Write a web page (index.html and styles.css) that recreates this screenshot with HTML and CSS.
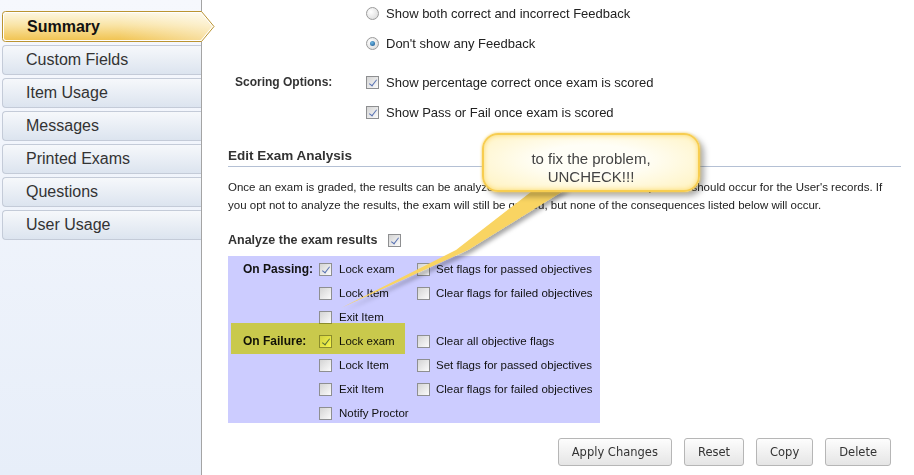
FILE: index.html
```html
<!DOCTYPE html>
<html lang="en">
<head>
  <meta charset="UTF-8">
  <meta name="viewport" content="width=device-width, initial-scale=1.0">
  <title>Exam Summary</title>
  <link rel="stylesheet" href="styles.css">
</head>
<body>
  <div class="layout">
    <aside class="sidebar">
      <ul class="tabs">
        <li class="tab active">
          <svg class="tab-bg" width="213" height="31" viewBox="0 0 213 31">
            <defs>
              <linearGradient id="tabGold" x1="0" y1="0" x2="0" y2="1">
                <stop offset="0" stop-color="#fdf6df"/>
                <stop offset="0.45" stop-color="#f9e4a6"/>
                <stop offset="1" stop-color="#f1c453"/>
              </linearGradient>
              <linearGradient id="tabFade" x1="0" y1="0" x2="1" y2="0">
                <stop offset="0.55" stop-color="#fff" stop-opacity="0"/>
                <stop offset="1" stop-color="#fff" stop-opacity="0.45"/>
              </linearGradient>
            </defs>
            <path d="M3.5,0.5 H199.5 L212,15.5 L199.5,30.5 H3.5 Q0.5,30.5 0.5,27.5 V3.5 Q0.5,0.5 3.5,0.5 Z" fill="#fff" stroke="#bb9431"/>
            <path d="M4,2 H198.8 L210,15.5 L198.8,29 H4 Q2,29 2,27 V4 Q2,2 4,2 Z" fill="url(#tabGold)"/>
            <path d="M4,2 H198.8 L210,15.5 L198.8,29 H4 Q2,29 2,27 V4 Q2,2 4,2 Z" fill="url(#tabFade)"/>
          </svg>
          <span class="tab-text">Summary</span>
        </li>
        <li class="tab">Custom Fields</li>
        <li class="tab">Item Usage</li>
        <li class="tab">Messages</li>
        <li class="tab">Printed Exams</li>
        <li class="tab">Questions</li>
        <li class="tab">User Usage</li>
      </ul>
    </aside>

    <main class="content">
      <div class="options feedback">
        <div class="opt-row">
          <span class="opt-label"></span>
          <span class="radio"></span>
          <span>Show both correct and incorrect Feedback</span>
        </div>
        <div class="opt-row">
          <span class="opt-label"></span>
          <span class="radio on"></span>
          <span>Don't show any Feedback</span>
        </div>
      </div>

      <div class="options scoring">
        <div class="opt-row">
          <span class="opt-label">Scoring Options:</span>
          <span class="cb on"></span>
          <span>Show percentage correct once exam is scored</span>
        </div>
        <div class="opt-row">
          <span class="opt-label"></span>
          <span class="cb on"></span>
          <span>Show Pass or Fail once exam is scored</span>
        </div>
      </div>

      <h3 class="section-title">Edit Exam Analysis</h3>
      <p class="section-text">
        Once an exam is graded, the results can be analyzed to determine whether consequences should occur for the User's records. If<br>
        you opt not to analyze the results, the exam will still be graded, but none of the consequences listed below will occur.
      </p>

      <div class="analyze">
        <span>Analyze the exam results</span>
        <span class="cb on"></span>
      </div>

      <div class="analysis-box">
        <div class="a-row">
          <span class="a-label">On Passing:</span>
          <span class="a-item first"><span class="cb on"></span>Lock exam</span>
          <span class="a-item"><span class="cb"></span>Set flags for passed objectives</span>
        </div>
        <div class="a-row">
          <span class="a-label"></span>
          <span class="a-item first"><span class="cb"></span>Lock Item</span>
          <span class="a-item"><span class="cb"></span>Clear flags for failed objectives</span>
        </div>
        <div class="a-row">
          <span class="a-label"></span>
          <span class="a-item first"><span class="cb"></span>Exit Item</span>
        </div>
        <div class="a-row">
          <span class="a-label">On Failure:</span>
          <span class="a-item first"><span class="cb on"></span>Lock exam</span>
          <span class="a-item"><span class="cb"></span>Clear all objective flags</span>
          <span class="marker"></span>
        </div>
        <div class="a-row">
          <span class="a-label"></span>
          <span class="a-item first"><span class="cb"></span>Lock Item</span>
          <span class="a-item"><span class="cb"></span>Set flags for passed objectives</span>
        </div>
        <div class="a-row">
          <span class="a-label"></span>
          <span class="a-item first"><span class="cb"></span>Exit Item</span>
          <span class="a-item"><span class="cb"></span>Clear flags for failed objectives</span>
        </div>
        <div class="a-row">
          <span class="a-label"></span>
          <span class="a-item first"><span class="cb"></span>Notify Proctor</span>
        </div>
      </div>

      <div class="actions">
        <button>Apply Changes</button>
        <button>Reset</button>
        <button>Copy</button>
        <button>Delete</button>
      </div>
    </main>
  </div>

  <div class="callout">
    <svg class="callout-tail" width="914" height="475" viewBox="0 0 914 475">
      <defs>
        <filter id="tailShadow" x="-20%" y="-20%" width="140%" height="140%">
          <feDropShadow dx="3" dy="3" stdDeviation="2" flood-color="#000" flood-opacity="0.35"/>
        </filter>
      </defs>
      <polygon points="536,188 568,188 468,250 341,308 456,250" fill="#f9d462" filter="url(#tailShadow)"/>
    </svg>
    <div class="bubble">to fix the problem,<br>UNCHECK!!!</div>
  </div>
</body>
</html>
```

FILE: styles.css
```css
body {
  margin: 0;
  font-family: "Liberation Sans", Arial, sans-serif;
  color: #222;
  background: #fff;
}
.layout {
  display: flex;
  height: 475px;
  overflow: hidden;
}

/* sidebar tabs */
.sidebar {
  width: 201px;
  flex-shrink: 0;
  border-right: 1px solid #a4a4a4;
  background: linear-gradient(#f6f8fd, #e7eef9);
  position: relative;
  z-index: 1;
}
.tabs {
  list-style: none;
  margin: 0;
  padding: 11px 0 0 2px;
}
.tab {
  height: 30px;
  box-sizing: border-box;
  margin-bottom: 3px;
  padding-left: 23px;
  line-height: 28px;
  font-size: 16px;
  color: #333;
  border: 1px solid #c4cbd8;
  border-right: none;
  border-radius: 4px 0 0 4px;
  background: linear-gradient(#f6f8fb, #dce4ef);
}
.tab.active {
  position: relative;
  height: 31px;
  width: 213px;
  border: none;
  background: none;
  padding-left: 25px;
  line-height: 31px;
  font-weight: bold;
  color: #111;
}
.tab-bg {
  position: absolute;
  left: 0;
  top: 0;
}
.tab-text {
  position: relative;
}

/* main content */
.content {
  flex: 1;
  padding: 0 13px 0 26px;
}
.options {
  font-size: 13px;
}
.feedback {
  margin-top: -2px;
}
.scoring {
  margin-top: 9px;
}
.opt-row {
  display: flex;
  align-items: center;
  height: 30px;
}
.opt-label {
  width: 138px;
  box-sizing: border-box;
  padding-left: 7px;
  font-size: 12px;
  font-weight: bold;
  color: #333;
}
.radio {
  width: 13px;
  height: 13px;
  box-sizing: border-box;
  border: 1px solid #9b9b9b;
  border-radius: 50%;
  background: radial-gradient(circle at 35% 35%, #fff, #d6d6d6);
  margin-right: 7px;
  position: relative;
}
.radio.on::after {
  content: "";
  position: absolute;
  left: 3px;
  top: 3px;
  width: 5px;
  height: 5px;
  border-radius: 50%;
  background: radial-gradient(circle at 40% 35%, #6fb9e6, #144f88);
}
.cb {
  display: inline-block;
  width: 13px;
  height: 13px;
  box-sizing: border-box;
  border: 1px solid #8e8f91;
  background: linear-gradient(135deg, #d4d4d4, #fbfbfb);
  margin-right: 7px;
  position: relative;
  flex-shrink: 0;
}
.cb.on::after {
  content: "";
  position: absolute;
  left: 4px;
  top: 1px;
  width: 3px;
  height: 7px;
  border: solid #5a73b3;
  border-width: 0 1.5px 1.5px 0;
  transform: rotate(38deg);
}

.section-title {
  margin: 20px 0 0;
  padding-bottom: 1px;
  font-size: 13.5px;
  line-height: 18px;
  color: #333;
  border-bottom: 1px solid #b4c0d4;
}
.section-text {
  margin: 11px 0 0;
  font-size: 11.5px;
  line-height: 18px;
  white-space: nowrap;
}
.analyze {
  display: flex;
  align-items: center;
  margin-top: 17px;
  height: 18px;
  font-size: 12.5px;
  font-weight: bold;
  color: #333;
}
.analyze .cb {
  margin-left: 11px;
}

.analysis-box {
  margin-top: 7px;
  width: 372px;
  height: 167px;
  box-sizing: border-box;
  padding-top: 1px;
  background: #ccccff;
}
.a-row {
  position: relative;
  display: flex;
  align-items: center;
  height: 24px;
  font-size: 11.5px;
  color: #111;
}
.a-label {
  width: 91px;
  box-sizing: border-box;
  padding-left: 15px;
  font-size: 12px;
  font-weight: bold;
}
.a-item {
  display: flex;
  align-items: center;
}
.a-item.first {
  width: 98px;
}
.a-item .cb {
  margin-right: 6px;
}
.a-item.first .cb {
  margin-right: 7px;
}
.marker {
  position: absolute;
  left: 3px;
  top: -6px;
  width: 174px;
  height: 31px;
  background: #fbfb4c;
  mix-blend-mode: multiply;
}

.actions {
  display: flex;
  justify-content: flex-end;
  gap: 12px;
  margin-top: 15px;
  padding-right: 10px;
}
button {
  height: 28px;
  padding: 0 13px;
  font-family: "DejaVu Sans", Tahoma, sans-serif;
  font-size: 11.5px;
  color: #333;
  border: 1px solid #b6b6b6;
  border-radius: 3px;
  background: linear-gradient(#fdfdfd, #e5e5e5);
  cursor: pointer;
}

/* annotation callout */
.callout {
  position: absolute;
  left: 0;
  top: 0;
  width: 914px;
  height: 475px;
  pointer-events: none;
  z-index: 2;
}
.callout-tail {
  position: absolute;
  left: 0;
  top: 0;
}
.bubble {
  position: absolute;
  left: 482px;
  top: 133px;
  width: 218px;
  height: 59px;
  box-sizing: border-box;
  padding-top: 15px;
  border: 2px solid #f7cd50;
  border-radius: 16px;
  background: radial-gradient(ellipse at 50% 45%, #fffef6 35%, #fff2bd 100%);
  box-shadow: 0 0 3px #f9d25c, inset 0 0 5px #fbd96a, 4px 4px 6px rgba(0, 0, 0, 0.35);
  text-align: center;
  font-size: 15px;
  line-height: 18px;
  color: #444;
}
```
